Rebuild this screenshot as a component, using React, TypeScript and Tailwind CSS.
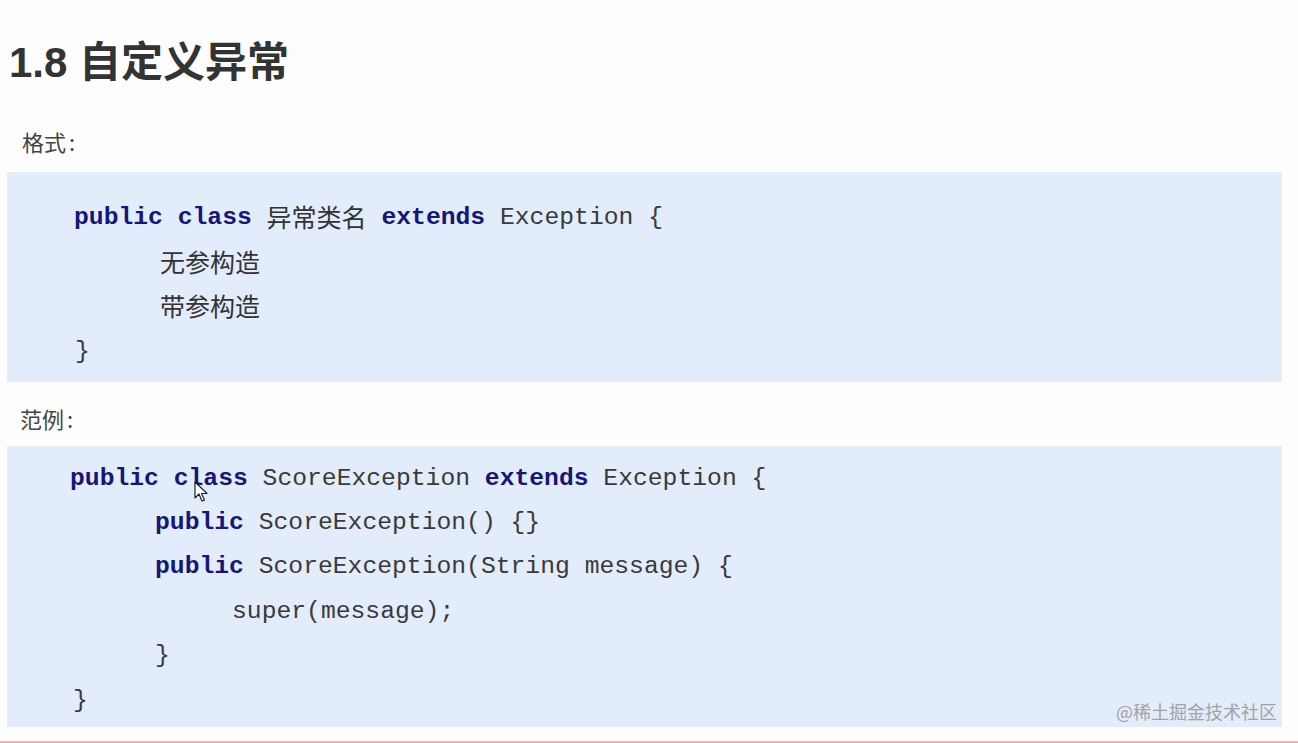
// Slide: 1.8 自定义异常
const mono = "font-['Liberation_Mono','Noto_Sans_CJK_SC',monospace]";

type Tok = { t: string; kw?: boolean; cjk?: boolean };

function Line({ indent, toks }: { indent: number; toks: Tok[] }) {
  return (
    <div className="h-[44.4px] flex items-center whitespace-pre" style={{ paddingLeft: indent }}>
      {toks.map((k, i) =>
        k.kw ? (
          <span key={i} className="font-bold text-[#16167a]">{k.t}</span>
        ) : k.cjk ? (
          <span key={i} className="font-['Noto_Sans_CJK_SC',sans-serif] text-[25px] text-[#333]">{k.t}</span>
        ) : (
          <span key={i} className="text-[#3a3a3a]">{k.t}</span>
        )
      )}
    </div>
  );
}

function Cursor() {
  return (
    <svg className="absolute left-[194px] top-[481px]" width="14" height="22" viewBox="0 0 14 22">
      <path d="M1 1 L1 17 L5 13 L8 20 L10.5 19 L7.5 12.5 L13 12.5 Z" fill="#fff" stroke="#222" strokeWidth="1.2" strokeLinejoin="round" />
    </svg>
  );
}

export default function App() {
  return (
    <div className="relative w-full h-[743px] bg-[#fdfdfd] overflow-hidden font-['Liberation_Sans','Noto_Sans_CJK_SC',sans-serif]">
      <h1 className="pt-[35px] pl-[9px] text-[42px] leading-[55px] font-bold text-[#333]">
        1.8 自定义异常
      </h1>

      <p className="mt-[37px] pl-[22px] text-[22px] leading-[28px] text-[#444] font-['Noto_Sans_CJK_SC',sans-serif]">
        格式<span className="ml-[3px]">:</span>
      </p>

      <div className={`mt-[17px] ml-[7px] w-[1275px] h-[210px] bg-[#e2ecfb] pt-[23px] pl-[67px] text-[24.7px] ${mono}`}>
        <Line indent={0} toks={[{ t: "public class", kw: true }, { t: " " }, { t: "异常类名", cjk: true }, { t: " " }, { t: "extends", kw: true }, { t: " Exception {" }]} />
        <Line indent={86} toks={[{ t: "无参构造", cjk: true }]} />
        <Line indent={86} toks={[{ t: "带参构造", cjk: true }]} />
        <div className="h-[46px] flex items-center text-[#3a3a3a] pl-[1px]">{"}"}</div>
      </div>

      <p className="mt-[22px] pl-[20px] text-[22px] leading-[28px] text-[#444] font-['Noto_Sans_CJK_SC',sans-serif]">
        范例<span className="ml-[3px]">:</span>
      </p>

      <div className={`mt-[14px] ml-[7px] w-[1275px] h-[281px] bg-[#e2ecfb] pt-[10px] pl-[63px] text-[24.7px] ${mono}`}>
        <Line indent={0} toks={[{ t: "public class", kw: true }, { t: " ScoreException " }, { t: "extends", kw: true }, { t: " Exception {" }]} />
        <Line indent={85} toks={[{ t: "public", kw: true }, { t: " ScoreException() {}" }]} />
        <Line indent={85} toks={[{ t: "public", kw: true }, { t: " ScoreException(String message) {" }]} />
        <Line indent={162} toks={[{ t: "super(message);" }]} />
        <Line indent={85} toks={[{ t: "}" }]} />
        <Line indent={3} toks={[{ t: "}" }]} />
      </div>

      <div className="absolute right-[21px] top-[699px] text-[18px] leading-[24px] text-[#a3a3a3] font-['Noto_Sans_CJK_SC',sans-serif]">
        @稀土掘金技术社区
      </div>

      <Cursor />

      <div className="absolute left-0 right-0 bottom-0 h-[2px] bg-[#f4b3a8]" />
    </div>
  );
}
